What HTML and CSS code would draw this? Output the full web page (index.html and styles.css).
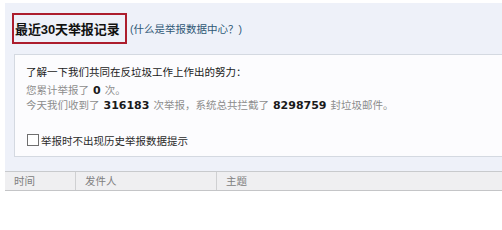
FILE: index.html
```html
<!DOCTYPE html>
<html lang="zh-CN">
<head>
<meta charset="utf-8">
<title>最近30天举报记录</title>
<link rel="stylesheet" href="styles.css">
</head>
<body>
<div class="page">
  <div class="panel">
    <div class="title-row">
      <div class="title-box"><span class="title">最近30天举报记录</span></div>
      <a class="link" href="#">(什么是举报数据中心？)</a>
    </div>
    <div class="box">
      <div class="line head">了解一下我们共同在反垃圾工作上作出的努力：</div>
      <div class="line gray first">您累计举报了<b class="num">0</b>次。</div>
      <div class="line gray">今天我们收到了<b class="num">316183</b>次举报，系统总共拦截了<b class="num">8298759</b>封垃圾邮件。</div>
      <label class="check-row"><span class="cb"></span><span class="cb-label">举报时不出现历史举报数据提示</span></label>
    </div>
  </div>
  <div class="thead">
    <div class="th c1">时间</div>
    <div class="th c2">发件人</div>
    <div class="th c3">主题</div>
  </div>
</div>
</body>
</html>
```
FILE: styles.css
```css
html, body {
  margin: 0;
  padding: 0;
  background: #ffffff;
  overflow: hidden;
}
body {
  font-family: "Liberation Sans", "Noto Sans CJK SC", sans-serif;
  font-size: 10.5px;
  color: #222;
}
.page {
  padding: 3px 0 0 5px;
}
.panel {
  background: #eef1f9;
  padding: 10px 0 14px 0;
}
.title-row {
  display: flex;
  align-items: center;
  margin-left: 7px;
  height: 31px;
}
.title-box {
  box-sizing: border-box;
  width: 115px;
  height: 31px;
  border: 2px solid #ac1d2d;
  display: flex;
  align-items: center;
  padding-left: 1px;
}
.title {
  font-size: 13px;
  font-weight: bold;
  color: #111;
  letter-spacing: -0.1px;
}
.link {
  margin-left: 3px;
  color: #2f5876;
  text-decoration: none;
  font-size: 10.5px;
}
.box {
  box-sizing: border-box;
  margin: 10px 0 0 9px;
  height: 103px;
  border: 1px solid #d4d9e1;
  border-right: none;
  background: #fcfcfe;
  padding: 9px 11px 0 11px;
}
.line {
  line-height: 15px;
  white-space: nowrap;
}
.head {
  line-height: 16px;
  color: #1a1a1a;
}
.gray {
  color: #8c8c8c;
}
.first {
  margin-top: 3px;
}
.num {
  font-family: "DejaVu Sans", sans-serif;
  font-weight: bold;
  font-size: 11px;
  color: #1a1a1a;
  margin: 0 4px 0 4px;
}
.check-row {
  display: flex;
  align-items: center;
  margin-top: 19px;
  margin-left: 1px;
  height: 16px;
}
.cb {
  box-sizing: border-box;
  width: 12px;
  height: 12px;
  border: 1px solid #6f6f6f;
  background: #fff;
}
.cb-label {
  margin-left: 2px;
  color: #2a2a2a;
}
.thead {
  display: flex;
  height: 18px;
  background: #efeff1;
  border-top: 1px solid #c8cacd;
  border-bottom: 1px solid #c4c5c7;
  color: #808080;
  line-height: 18px;
}
.th {
  box-sizing: border-box;
  padding-left: 9px;
}
.c1 {
  width: 71px;
  border-right: 1px solid #cfd0d2;
}
.c2 {
  width: 141px;
  border-right: 1px solid #cfd0d2;
}
.c3 {
  flex: 1;
}
```
